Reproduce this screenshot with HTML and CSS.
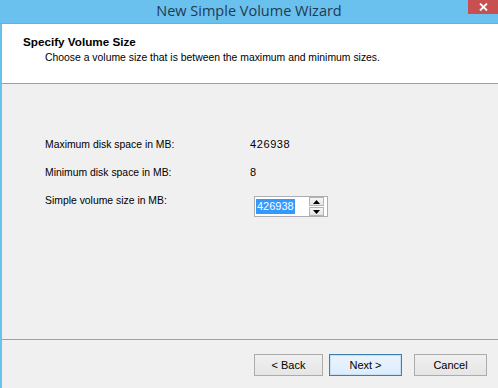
FILE: index.html
```html
<!DOCTYPE html>
<html lang="en">
<head>
  <meta charset="UTF-8">
  <title>New Simple Volume Wizard</title>
  <link rel="stylesheet" href="styles.css">
</head>
<body>

  <div class="window">
    <div class="titlebar">
      <span></span>
      <span class="title">New Simple Volume Wizard</span>
      <button class="close">
        <svg width="9" height="8" viewBox="0 0 9 8"><path d="M1 0.5 L8 7.5 M8 0.5 L1 7.5" stroke="#fff" stroke-width="1.8"/></svg>
      </button>
    </div>

    <div class="header">
      <div class="heading">Specify Volume Size</div>
      <div class="subheading">Choose a volume size that is between the maximum and minimum sizes.</div>
    </div>

    <div class="content">
      <div class="rows">
        <span class="label">Maximum disk space in MB:</span>
        <span class="value">426938</span>

        <span class="label">Minimum disk space in MB:</span>
        <span class="value">8</span>

        <span class="label">Simple volume size in MB:</span>
        <div class="spinbox">
          <span class="selected">426938</span>
          <div class="spin">
            <div class="arrow">
              <svg width="7" height="4" viewBox="0 0 7 4"><path d="M3.5 0 L7 4 L0 4 Z" fill="#000"/></svg>
            </div>
            <div class="arrow">
              <svg width="7" height="4" viewBox="0 0 7 4"><path d="M0 0 L7 0 L3.5 4 Z" fill="#000"/></svg>
            </div>
          </div>
        </div>
      </div>

      <div class="footer">
        <button class="btn back">&lt; Back</button>
        <button class="btn default">Next &gt;</button>
        <button class="btn">Cancel</button>
      </div>
    </div>
  </div>

</body>
</html>
```

FILE: styles.css
```css
body {
  margin: 0;
  font-family: 'Liberation Sans', Arial, sans-serif;
  font-size: 10.4px;
  color: #000;
}

.window {
  width: 498px;
  height: 388px;
  box-sizing: border-box;
  border-left: 2px solid #6bc1ee;
  display: flex;
  flex-direction: column;
  background: #f0f0f0;
}

.titlebar {
  height: 24px;
  margin-left: -2px;
  box-sizing: border-box;
  background: #6bc1ee;
  border-bottom: 1px solid #62b4e0;
  display: grid;
  grid-template-columns: 1fr auto 1fr;
}

.title {
  font-family: 'Open Sans', 'Noto Sans', sans-serif;
  font-size: 14.5px;
  line-height: 21px;
  color: #1e3a52;
}

.close {
  justify-self: end;
  width: 30px;
  height: 14px;
  padding: 0;
  border: none;
  background: #c75050;
  display: flex;
  align-items: center;
  justify-content: center;
}

.header {
  height: 60px;
  box-sizing: border-box;
  background: #fff;
  border-bottom: 1px solid #a0a0a0;
  padding: 11px 0 0 21px;
  line-height: 13px;
}

.heading {
  font-weight: bold;
  font-size: 11.7px;
}

.subheading {
  margin-top: 3px;
  padding-left: 22px;
}

.content {
  flex: 1;
  display: flex;
  flex-direction: column;
}

.rows {
  display: grid;
  grid-template-columns: 205px auto;
  row-gap: 15px;
  align-items: start;
  padding: 54px 0 0 43px;
  line-height: 13px;
}

.value {
  font-size: 11px;
  letter-spacing: 0.6px;
}

.spinbox {
  justify-self: start;
  margin: 2px 0 0 4px;
  width: 74px;
  height: 21px;
  box-sizing: border-box;
  border: 1px solid #abadb3;
  background: #fff;
  display: flex;
  align-items: center;
  justify-content: space-between;
  padding: 0 3px 0 1px;
}

.selected {
  background: #3399ff;
  color: #fff;
  font-size: 11px;
  line-height: 15px;
  padding: 0 1px;
}

.spin {
  display: flex;
  flex-direction: column;
  gap: 1px;
}

.arrow {
  width: 15px;
  height: 9px;
  box-sizing: border-box;
  border: 1px solid #b5b5b5;
  background: linear-gradient(#f6f6f6, #e4e4e4);
  display: flex;
  align-items: center;
  justify-content: center;
}

.footer {
  margin-top: auto;
  border-top: 1px solid #a0a0a0;
  padding: 14px 11px 12px 0;
  display: flex;
  justify-content: flex-end;
  gap: 12px;
}

.btn {
  width: 73px;
  height: 22px;
  padding: 0;
  font-family: 'Liberation Sans', Arial, sans-serif;
  font-size: 11px;
  color: #000;
  border: 1px solid #acacac;
  background: linear-gradient(#f0f0f0, #e5e5e5);
}

.back {
  width: 69px;
  margin-right: -6px;
}

.default {
  border-color: #3c7fb1;
  background: linear-gradient(#ecf4fc, #dcecfc);
  box-shadow: inset 0 0 0 1px #c8e0f6;
}
```
